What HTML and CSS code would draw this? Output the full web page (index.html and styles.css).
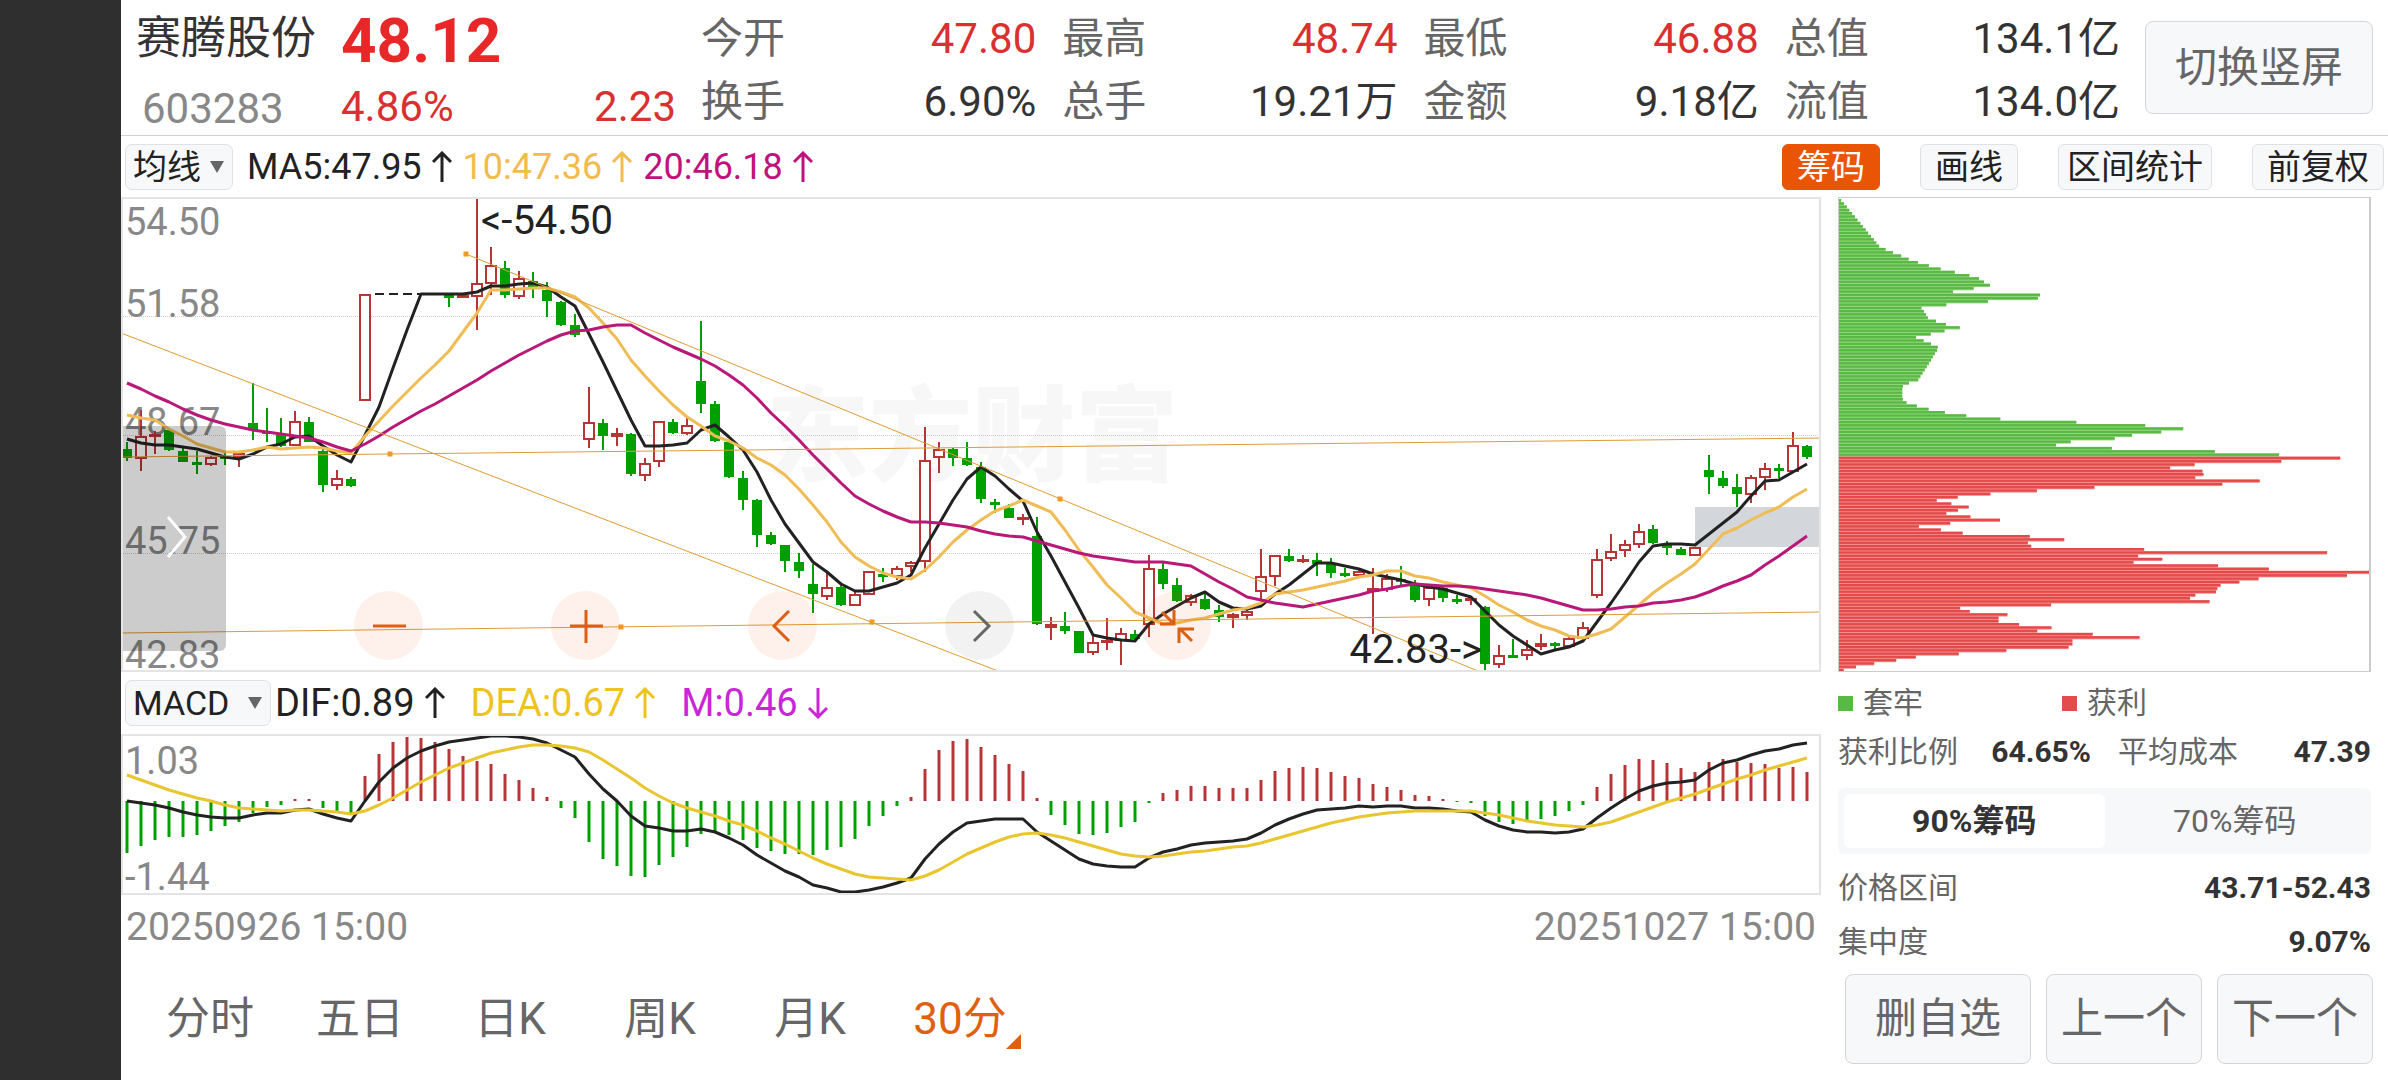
FILE: index.html
```html
<!DOCTYPE html>
<html lang="zh-CN">
<head>
  <meta charset="UTF-8">
  <meta name="viewport" content="width=device-width, initial-scale=1">
  <title>赛腾股份 603283</title>
  <link rel="stylesheet" href="styles.css">
</head>
<body>

  <div class="notch"></div>

  <main class="app">
    <header class="header">
      <div class="stock">
        <h1 class="stock-name">赛腾股份</h1>
        <div class="stock-code">603283</div>
      </div>
      <div class="price">
        <div class="price-now">48.12</div>
        <div class="price-change"><span>4.86%</span><span>2.23</span></div>
      </div>
      <dl class="stats">
        <div class="stat"><dt>今开</dt><dd class="up">47.80</dd></div>
        <div class="stat"><dt>最高</dt><dd class="up">48.74</dd></div>
        <div class="stat"><dt>最低</dt><dd class="up">46.88</dd></div>
        <div class="stat"><dt>总值</dt><dd>134.1亿</dd></div>
        <div class="stat"><dt>换手</dt><dd>6.90%</dd></div>
        <div class="stat"><dt>总手</dt><dd>19.21万</dd></div>
        <div class="stat"><dt>金额</dt><dd>9.18亿</dd></div>
        <div class="stat"><dt>流值</dt><dd>134.0亿</dd></div>
      </dl>
      <button class="btn btn-rotate">切换竖屏</button>
    </header>

    <div class="toolbar">
      <div class="picker picker-ma">
        <select aria-label="主图指标">
          <option>均线</option>
        </select>
      </div>
      <div class="legend legend-ma">
        <span class="c-black">MA5:47.95<svg class="arrow" viewBox="0 0 20 32"><path d="M10 31V2M1 11L10 2L19 11"/></svg></span>
        <span class="c-orange">10:47.36<svg class="arrow" viewBox="0 0 20 32"><path d="M10 31V2M1 11L10 2L19 11"/></svg></span>
        <span class="c-magenta">20:46.18<svg class="arrow" viewBox="0 0 20 32"><path d="M10 31V2M1 11L10 2L19 11"/></svg></span>
      </div>
      <div class="tools">
        <button class="tool active">筹码</button>
        <button class="tool">画线</button>
        <button class="tool tool-wide">区间统计</button>
        <button class="tool">前复权</button>
      </div>
    </div>

    <div class="content">
      <section class="charts">
        <div class="frame">
          <svg id="kline" class="chart" viewBox="123 200 1696 471"></svg>
          <button class="drawer" aria-label="展开">
            <svg viewBox="0 0 22 44"><path d="M3 2L20 22L3 42"/></svg>
          </button>
          <div class="zoom-bar">
            <button class="round" aria-label="缩小"><svg viewBox="-20 -20 40 40"><path d="M-16 0H17"/></svg></button>
            <button class="round" aria-label="放大"><svg viewBox="-20 -20 40 40"><path d="M-16 0H17M0-16V17"/></svg></button>
            <button class="round" aria-label="左移"><svg viewBox="-20 -20 40 40"><path d="M6-15L-9 0L6 15"/></svg></button>
            <button class="round disabled" aria-label="右移"><svg viewBox="-20 -20 40 40"><path d="M-6-15L9 0L-6 15"/></svg></button>
            <button class="round" aria-label="收起"><svg viewBox="-20 -20 40 40"><path d="M-15-14L-3-2M-17-2H-3V-16M15 15L3 3M2 17V3H17"/></svg></button>
          </div>
        </div>

        <div class="sub-bar">
          <div class="picker picker-macd">
            <select aria-label="副图指标">
              <option>MACD</option>
            </select>
          </div>
          <div class="legend legend-macd">
            <span class="c-black">DIF:0.89<svg class="arrow" viewBox="0 0 20 32"><path d="M10 31V2M1 11L10 2L19 11"/></svg></span>
            <span class="c-yellow">DEA:0.67<svg class="arrow" viewBox="0 0 20 32"><path d="M10 31V2M1 11L10 2L19 11"/></svg></span>
            <span class="c-purple">M:0.46<svg class="arrow" viewBox="0 0 20 32"><path d="M10 1V30M1 21L10 30L19 21"/></svg></span>
          </div>
        </div>

        <div class="frame">
          <svg id="macd" class="chart" viewBox="123 -65 1696 157"></svg>
        </div>

        <div class="dates">
          <time>20250926 15:00</time>
          <time>20251027 15:00</time>
        </div>
      </section>

      <section class="chips">
        <svg id="chips" class="chips-chart" viewBox="0 0 1492 471" preserveAspectRatio="none"></svg>
        <div class="chips-legend">
          <span class="key key-green">套牢</span>
          <span class="key key-red">获利</span>
        </div>
        <div class="pair">
          <div class="row"><span>获利比例</span><b>64.65%</b></div>
          <div class="row"><span>平均成本</span><b>47.39</b></div>
        </div>
        <div class="segment">
          <button class="active">90%筹码</button>
          <button>70%筹码</button>
        </div>
        <div class="row row-tall"><span>价格区间</span><b>43.71-52.43</b></div>
        <div class="row row-tall"><span>集中度</span><b>9.07%</b></div>
      </section>
    </div>

    <footer class="footer">
      <nav class="tabs">
        <a href="#">分时</a>
        <a href="#">五日</a>
        <a href="#">日K</a>
        <a href="#">周K</a>
        <a href="#">月K</a>
        <a href="#" class="active">30分</a>
      </nav>
      <div class="actions">
        <button class="btn btn-remove">删自选</button>
        <button class="btn">上一个</button>
        <button class="btn">下一个</button>
      </div>
    </footer>
  </main>

  <script src="script.js"></script>
</body>
</html>
```
FILE: styles.css
```css
* {
  box-sizing: border-box;
}

body {
  margin: 0;
  display: flex;
  min-height: 100vh;
  background: #fff;
  color: #333;
  font-family: Roboto, "Noto Sans CJK SC", sans-serif;
  font-size: 42px;
  line-height: 1;
}

button,
select {
  font-family: inherit;
  line-height: 1;
  cursor: pointer;
}

.notch {
  flex: 0 0 121px;
  background: #2f2f2f;
}

.app {
  flex: 1;
  min-width: 0;
  display: flex;
  flex-direction: column;
}

/* header */

.header {
  display: flex;
  height: 136px;
  padding-left: 15px;
  border-bottom: 1px solid #d0d0d0;
}

.stock {
  width: 205px;
  padding-top: 16px;
}

.stock-name {
  margin: 0;
  font-size: 45px;
  font-weight: 400;
}

.stock-code {
  padding: 27px 0 0 6px;
  color: #888;
}

.price {
  width: 335px;
  padding-top: 10px;
  color: #d93030;
}

.price-now {
  color: #e82828;
  font-size: 62px;
  font-weight: 700;
}

.price-change {
  display: flex;
  justify-content: space-between;
  padding-top: 14px;
}

.stats {
  flex: 1;
  display: grid;
  grid-template-columns: repeat(4, 1fr);
  grid-auto-rows: 63px;
  column-gap: 26px;
  margin: 0;
  padding: 7px 25px 0;
}

.stat {
  display: flex;
  align-items: center;
  justify-content: space-between;
}

.stat dt {
  color: #666;
}

.stat dd {
  margin: 0;
}

.stat .up {
  color: #d93030;
}

.btn {
  width: 156px;
  height: 90px;
  padding: 0;
  border: 1px solid #d2d5d9;
  border-radius: 8px;
  background: #f7f8fa;
  color: #666;
  font-size: 42px;
}

.btn-rotate {
  width: 228px;
  height: 93px;
  margin: 21px 15px 0 0;
}

/* indicator rows */

.toolbar,
.sub-bar {
  display: flex;
  align-items: center;
  height: 62px;
  padding-left: 4px;
}

.toolbar {
  height: 61px;
}

.picker {
  position: relative;
}

.picker::after {
  content: "";
  position: absolute;
  right: 9px;
  top: 17px;
  border: 7px solid transparent;
  border-top: 12px solid #666;
  border-bottom: 0;
  pointer-events: none;
}

.picker select {
  width: 100%;
  height: 46px;
  padding: 0 7px;
  appearance: none;
  border: 1px solid #dfe1e4;
  border-radius: 7px;
  background: #f7f8fa;
  color: #222;
  font-size: 34px;
}

.picker-ma {
  width: 108px;
}

.picker-macd {
  width: 146px;
}

.legend {
  display: flex;
}

.legend span {
  display: flex;
  align-items: center;
  gap: 10px;
}

.legend-ma {
  gap: 11px;
  padding-left: 14px;
  font-size: 36px;
}

.legend-macd {
  gap: 26px;
  padding-left: 4px;
  font-size: 38px;
}

.arrow {
  width: 20px;
  height: 32px;
  fill: none;
  stroke: currentColor;
  stroke-width: 3;
}

.c-black { color: #222; }
.c-orange { color: #f2bb4d; }
.c-magenta { color: #c0127f; }
.c-yellow { color: #edc31f; }
.c-purple { color: #c926d6; }

.tools {
  display: flex;
  gap: 40px;
  margin-left: auto;
  padding-right: 4px;
}

.tool {
  height: 46px;
  padding: 0 14px;
  border: 1px solid #dfe1e4;
  border-radius: 6px;
  background: #f7f8fa;
  color: #222;
  font-size: 34px;
}

.tool-wide {
  padding: 0 8px;
}

.tool.active {
  border-color: #e95504;
  background: #e95504;
  color: #fff;
}

/* charts */

.content {
  display: grid;
  grid-template-columns: minmax(0, 1fr) 533px;
  column-gap: 17px;
  padding-right: 17px;
}

.frame {
  position: relative;
  border: 2px solid #e4e4e4;
}

.chart {
  display: block;
  width: 100%;
}

.axis {
  fill: #888;
  font-size: 38px;
}

.mark {
  fill: #222;
  font-size: 40px;
}

.watermark {
  fill: #f7f7f7;
  font-family: "Noto Sans CJK SC", sans-serif;
  font-size: 103px;
  font-weight: 900;
}

.grid {
  stroke: #ccc;
  stroke-dasharray: 1 1;
}

.gap {
  fill: #d3d6db;
}

.trend {
  stroke: #dd9c35;
}

.handle {
  fill: #f29a1f;
}

.dash {
  stroke: #222;
  stroke-width: 2;
  stroke-dasharray: 9 5;
}

.line {
  fill: none;
  stroke-width: 3;
  stroke-linejoin: round;
}

.line-black { stroke: #222; }
.line-orange { stroke: #f0bc55; }
.line-magenta { stroke: #b81878; }
.line-yellow { stroke: #e9c52f; }

.candle {
  stroke-width: 2;
}

.candle-up {
  fill: #fff;
  stroke: #b93434;
}

.candle-down {
  fill: #00a000;
  stroke: #00a000;
}

.bar {
  stroke-width: 3;
}

.drawer {
  position: absolute;
  left: 0;
  top: 227px;
  width: 103px;
  height: 225px;
  padding: 0 0 0 2px;
  border: 0;
  border-radius: 0 6px 6px 0;
  background: rgba(0, 0, 0, 0.2);
}

.drawer svg {
  width: 22px;
  height: 44px;
  fill: none;
  stroke: #fff;
  stroke-width: 3;
}

.zoom-bar {
  position: absolute;
  left: 231px;
  bottom: 10px;
  display: flex;
  gap: 128px;
}

.round {
  display: flex;
  align-items: center;
  justify-content: center;
  width: 69px;
  height: 69px;
  padding: 0;
  border: 0;
  border-radius: 50%;
  background: rgba(240, 90, 20, 0.09);
}

.round svg {
  width: 40px;
  height: 40px;
  fill: none;
  stroke: #dc5f14;
  stroke-width: 3;
}

.round.disabled {
  background: rgba(0, 0, 0, 0.05);
}

.round.disabled svg {
  stroke: #666;
}

.dates {
  display: flex;
  align-items: center;
  justify-content: space-between;
  height: 64px;
  padding: 0 5px;
  color: #888;
  font-size: 39px;
}

/* chips panel */

.chips {
  color: #666;
  font-size: 30px;
}

.chips-chart {
  display: block;
  width: 100%;
  height: 475px;
  border: 1px solid #ccc;
  border-right-width: 2px;
}

.chips-legend {
  display: grid;
  grid-template-columns: 224px 1fr;
  align-items: center;
  height: 62px;
}

.key {
  display: flex;
  align-items: center;
  gap: 10px;
}

.key::before {
  content: "";
  width: 15px;
  height: 15px;
}

.key-green::before {
  background: #5ab845;
}

.key-red::before {
  background: #e54b4b;
}

.pair {
  display: grid;
  grid-template-columns: 1fr 1fr;
  column-gap: 27px;
}

.row {
  display: flex;
  align-items: center;
  justify-content: space-between;
  height: 36px;
}

.row b {
  color: #333;
}

.row-tall {
  height: 54px;
}

.segment {
  display: grid;
  grid-template-columns: 1fr 1fr;
  height: 66px;
  margin: 18px 0 7px;
  padding: 6px;
  border-radius: 6px;
  background: #f7f8fa;
}

.segment button {
  border: 0;
  border-radius: 6px;
  background: none;
  color: #666;
  font-size: 32px;
}

.segment .active {
  background: #fff;
  color: #333;
  font-weight: 700;
}

/* footer */

.footer {
  display: flex;
  align-items: center;
  justify-content: space-between;
  padding: 5px 15px 15px 14px;
}

.tabs {
  display: flex;
}

.tabs a {
  position: relative;
  width: 150px;
  color: #666;
  font-size: 44px;
  text-align: center;
  text-decoration: none;
}

.tabs .active {
  color: #e06010;
}

.tabs .active::after {
  content: "";
  position: absolute;
  right: 14px;
  bottom: -8px;
  border-left: 15px solid transparent;
  border-bottom: 15px solid #e06010;
}

.actions {
  display: flex;
  gap: 15px;
}

.btn-remove {
  width: 186px;
}
```
FILE: script.js
```js
const NS = "http://www.w3.org/2000/svg";
const STEP = 14;
const START = 127;

// direction, high, body top, body bottom, low
const candles = [
  ["d", 443, 450, 459, 462], ["u", 411, 437, 460, 472], ["u", 432, 435, 438, 455], ["d", 430, 431, 451, 452],
  ["d", 447, 452, 463, 463], ["d", 452, 463, 464, 475], ["u", 457, 458, 466, 467], ["d", 454, 457, 458, 466],
  ["u", 454, 454, 459, 468], ["d", 384, 424, 431, 441], ["d", 409, 432, 435, 443], ["d", 419, 436, 447, 448],
  ["u", 412, 422, 447, 447], ["d", 418, 423, 443, 443], ["d", 449, 452, 486, 493], ["u", 471, 479, 487, 491],
  ["d", 478, 480, 487, 488], ["u", 295, 295, 402, 402], null, null,
  null, null, null, ["d", 296, 296, 297, 308],
  ["u", 296, 296, 297, 297], ["u", 199, 284, 298, 331], ["u", 248, 266, 285, 296], ["d", 262, 269, 296, 299],
  ["u", 272, 279, 298, 300], ["d", 273, 282, 288, 299], ["d", 283, 291, 302, 318], ["d", 302, 303, 326, 327],
  ["d", 315, 326, 336, 338], ["u", 388, 423, 441, 449], ["d", 420, 424, 437, 451], ["u", 429, 434, 438, 447],
  ["d", 434, 435, 475, 477], ["u", 459, 464, 477, 482], ["u", 422, 422, 463, 468], ["d", 420, 423, 434, 435],
  ["u", 418, 426, 435, 436], ["d", 322, 382, 405, 414], ["d", 402, 405, 442, 443], ["d", 442, 443, 478, 479],
  ["d", 472, 479, 501, 511], ["d", 500, 501, 536, 548], ["d", 533, 536, 545, 546], ["d", 546, 546, 562, 573],
  ["d", 554, 563, 572, 579], ["d", 565, 585, 595, 614], ["u", 573, 588, 598, 601], ["d", 586, 588, 606, 607],
  ["u", 592, 595, 607, 607], ["u", 572, 572, 596, 596], ["d", 569, 575, 577, 583], ["u", 567, 569, 578, 581],
  ["u", 562, 563, 568, 573], ["u", 428, 461, 563, 573], ["u", 443, 450, 459, 474], ["d", 449, 450, 459, 467],
  ["d", 443, 459, 466, 467], ["d", 463, 468, 500, 504], ["d", 500, 503, 506, 514], ["d", 505, 509, 519, 519],
  ["u", 515, 518, 519, 526], ["d", 518, 537, 625, 626], ["u", 618, 625, 629, 641], ["d", 613, 627, 632, 635],
  ["d", 632, 632, 654, 654], ["u", 637, 643, 654, 656], ["u", 619, 641, 644, 651], ["u", 629, 634, 642, 666],
  ["d", 631, 635, 640, 641], ["u", 556, 569, 626, 638], ["d", 562, 570, 585, 590], ["d", 579, 586, 602, 603],
  ["u", 595, 596, 604, 607], ["d", 593, 600, 610, 611], ["d", 606, 611, 618, 623], ["u", 614, 615, 619, 629],
  ["u", 610, 612, 617, 621], ["u", 550, 577, 593, 600], ["u", 556, 556, 578, 587], ["d", 550, 557, 562, 563],
  ["u", 556, 560, 563, 564], ["d", 554, 561, 565, 577], ["d", 559, 565, 574, 579], ["d", 569, 574, 575, 578],
  ["u", 571, 572, 577, 577], ["u", 569, 589, 593, 635], ["u", 575, 579, 591, 593], ["d", 567, 580, 583, 586],
  ["d", 581, 586, 601, 603], ["u", 587, 588, 601, 607], ["d", 588, 589, 599, 603], ["d", 596, 600, 602, 605],
  ["u", 597, 599, 602, 606], ["d", 607, 608, 665, 673], ["u", 646, 656, 666, 669], ["d", 640, 656, 658, 658],
  ["u", 641, 650, 657, 661], ["u", 635, 644, 648, 651], ["d", 643, 644, 647, 650], ["u", 638, 639, 648, 649],
  ["u", 623, 628, 640, 642], ["u", 550, 560, 597, 599], ["u", 535, 552, 560, 562], ["u", 541, 545, 552, 558],
  ["u", 525, 532, 546, 549], ["d", 526, 530, 544, 545], ["d", 542, 546, 549, 556], ["d", 548, 550, 556, 556],
  ["u", 548, 548, 557, 557], ["d", 456, 471, 478, 495], ["d", 472, 479, 487, 489], ["d", 475, 488, 495, 508],
  ["u", 476, 478, 496, 504], ["u", 464, 469, 479, 491], ["d", 465, 469, 472, 479], ["u", 433, 446, 473, 474],
  ["d", 446, 447, 458, 460]
];

const ma5 = [
  440, 444, 446, 446, 448, 450, 454, 458, 460, 455, 448, 445, 438, 437, 447, 456, 463, 436, 408, 369,
  331, 295, 295, 295, 295, 293, 287, 287, 285, 284, 288, 298, 307, 335, 363, 392, 421, 447, 447, 446,
  444, 431, 426, 438, 451, 473, 501, 525, 544, 563, 573, 585, 592, 592, 588, 584, 576, 549, 525, 501,
  480, 468, 477, 490, 502, 533, 557, 583, 609, 636, 639, 641, 642, 625, 615, 607, 599, 593, 603, 609,
  610, 607, 595, 586, 575, 564, 564, 567, 570, 575, 578, 581, 585, 588, 590, 594, 598, 612, 626, 637,
  646, 655, 651, 648, 642, 623, 604, 584, 563, 547, 545, 545, 546, 535, 524, 513, 497, 482, 481, 473,
  465
];

const ma10 = [
  416, 419, 421, 430, 437, 445, 449, 453, 453, 451, 448, 450, 449, 448, 449, 452, 454, 437, 422, 407,
  393, 379, 366, 352, 333, 314, 291, 291, 290, 289, 289, 293, 298, 309, 324, 340, 361, 377, 392, 406,
  418, 427, 437, 442, 449, 459, 466, 476, 490, 506, 523, 543, 558, 567, 574, 578, 580, 571, 558, 543,
  531, 521, 512, 507, 501, 507, 513, 531, 551, 568, 586, 599, 613, 619, 625, 624, 621, 619, 615, 611,
  609, 604, 595, 593, 591, 588, 585, 582, 578, 576, 572, 572, 577, 579, 583, 586, 589, 597, 606, 613,
  621, 627, 631, 637, 639, 635, 630, 618, 606, 594, 584, 575, 565, 550, 535, 529, 521, 514, 508, 498,
  490
];

const ma20 = [
  384, 390, 397, 403, 410, 416, 421, 425, 428, 431, 433, 435, 437, 439, 443, 448, 452, 445, 437, 428,
  420, 412, 405, 397, 389, 381, 372, 364, 356, 349, 342, 336, 332, 331, 328, 326, 326, 334, 341, 348,
  354, 360, 367, 376, 386, 399, 414, 427, 441, 456, 470, 484, 497, 505, 512, 518, 523, 523, 524, 526,
  528, 532, 535, 537, 538, 542, 546, 550, 554, 557, 559, 561, 563, 563, 563, 565, 567, 575, 583, 590,
  598, 601, 604, 606, 608, 605, 602, 599, 596, 592, 590, 587, 585, 586, 587, 587, 588, 590, 592, 594,
  596, 599, 603, 607, 611, 611, 610, 608, 607, 604, 603, 601, 598, 593, 587, 582, 576, 566, 557, 547,
  537
];

const hist = [
  -52, -45, -39, -36, -36, -34, -30, -25, -21, -12, -6, -4, 2, 2, -7, -10, -13, 25, 47, 59,
  64, 63, 59, 52, 45, 40, 37, 27, 21, 13, 4, -7, -17, -41, -58, -65, -75, -76, -64, -56,
  -46, -33, -30, -34, -39, -47, -50, -53, -53, -54, -49, -46, -38, -25, -15, -5, 4, 32, 51, 60,
  62, 54, 46, 37, 30, 3, -14, -24, -33, -34, -32, -26, -21, -2, 8, 11, 15, 15, 13, 13,
  13, 21, 30, 33, 34, 33, 29, 25, 23, 17, 14, 11, 6, 5, 2, -1, -2, -15, -21, -23,
  -21, -18, -15, -10, -4, 14, 27, 36, 42, 41, 38, 33, 29, 39, 42, 39, 38, 37, 33, 34,
  29
];

const dif = [
  0, -2, -4, -7, -11, -14, -16, -17, -17, -14, -12, -12, -9, -8, -13, -17, -20, 0, 19, 33,
  43, 50, 55, 59, 61, 63, 65, 65, 64, 62, 58, 51, 44, 27, 12, 0, -15, -25, -27, -30,
  -30, -28, -31, -37, -44, -54, -62, -70, -76, -84, -87, -91, -91, -89, -86, -82, -77, -58, -43, -31,
  -22, -20, -18, -18, -18, -31, -40, -49, -58, -63, -65, -66, -66, -57, -51, -48, -44, -42, -41, -40,
  -38, -32, -24, -18, -13, -9, -8, -7, -5, -6, -5, -5, -7, -7, -8, -10, -11, -19, -25, -29,
  -31, -31, -32, -31, -28, -17, -7, 2, 10, 15, 18, 19, 21, 31, 38, 41, 46, 50, 52, 56,
  58
];

const dea = [
  26, 21, 16, 11, 7, 3, 0, -4, -7, -8, -9, -10, -9, -9, -10, -11, -13, -10, -4, 3,
  11, 19, 26, 33, 38, 43, 48, 51, 54, 56, 56, 55, 53, 49, 41, 32, 23, 13, 5, -2,
  -7, -11, -15, -20, -24, -30, -37, -43, -50, -57, -63, -68, -73, -76, -77, -78, -79, -75, -69, -61,
  -53, -47, -41, -36, -33, -32, -34, -37, -41, -45, -49, -53, -55, -56, -55, -53, -51, -50, -48, -46,
  -45, -42, -38, -34, -30, -26, -22, -19, -16, -14, -12, -11, -10, -10, -10, -10, -10, -12, -14, -17,
  -20, -22, -24, -25, -26, -24, -21, -16, -11, -6, -1, 3, 7, 12, 17, 22, 26, 31, 35, 39,
  43
];

const trapped = [
  6, 14, 22, 29, 37, 45, 52, 60, 67, 75, 82, 90, 98, 105, 113, 131, 152, 175, 196, 222,
  253, 286, 326, 367, 394, 408, 425, 379, 321, 566, 560, 419, 302, 232, 239, 245, 250, 273, 301, 340,
  297, 258, 217, 238, 259, 278, 276, 270, 264, 259, 253, 247, 241, 235, 229, 223, 197, 180, 178, 178,
  178, 180, 190, 219, 252, 298, 358, 454, 668, 862, 969, 907, 825, 776, 652, 611, 768, 1058, 1239
];

const profit = [
  1411, 1245, 1001, 932, 1023, 1026, 1003, 1184, 1079, 719, 557, 426, 334, 275, 316, 365, 335, 302, 370, 453,
  313, 225, 287, 348, 537, 634, 532, 541, 859, 1374, 842, 910, 829, 1067, 1210, 1492, 1430, 1181, 1127, 1074,
  1065, 1061, 1003, 988, 1043, 597, 341, 368, 474, 449, 449, 507, 598, 558, 714, 846, 657, 657, 646, 471,
  337, 216, 161, 99, 48, 13
];

function add(svg, tag, attrs, text) {
  const el = document.createElementNS(NS, tag);
  for (const key in attrs) el.setAttribute(key, attrs[key]);
  if (text) el.textContent = text;
  svg.appendChild(el);
}

function xAt(i) {
  return START + i * STEP;
}

function drawLine(svg, values, cls, sign) {
  const points = values.map((v, i) => xAt(i) + "," + v * sign).join(" ");
  add(svg, "polyline", { points: points, class: "line " + cls });
}

function drawKline() {
  const svg = document.getElementById("kline");

  add(svg, "text", { x: 766, y: 474, class: "watermark" }, "东方财富");
  [317, 436, 554].forEach(y => add(svg, "line", { x1: 121, x2: 1821, y1: y + 0.5, y2: y + 0.5, class: "grid" }));
  add(svg, "rect", { x: 1695, y: 508, width: 126, height: 40, class: "gap" });

  [["54.50", 236], ["51.58", 318], ["48.67", 436], ["45.75", 555], ["42.83", 669]].forEach(([label, y]) => {
    add(svg, "text", { x: 125, y: y, class: "axis" }, label);
  });

  add(svg, "line", { x1: 375, x2: 425, y1: 295, y2: 295, class: "dash" });

  candles.forEach((c, i) => {
    if (!c) return;
    const [dir, high, top, bottom, low] = c;
    const x = xAt(i);
    const h = Math.max(bottom - top, 2);
    const cls = "candle candle-" + (dir === "u" ? "up" : "down");
    add(svg, "path", { d: `M${x} ${high}V${top}M${x} ${bottom}V${low}`, class: cls });
    // hollow bodies are a little wider than the filled ones
    const half = dir === "u" ? 5 : 4;
    add(svg, "rect", { x: x - half, y: top + 1, width: half * 2, height: Math.max(h - 2, 1), class: cls });
  });

  drawLine(svg, ma5, "line-black", 1);
  drawLine(svg, ma10, "line-orange", 1);
  drawLine(svg, ma20, "line-magenta", 1);

  // hand-drawn trend lines
  [[121, 334, 998, 672], [466, 255, 1478, 672], [121, 458, 1821, 439], [121, 634, 1821, 613]].forEach(t => {
    add(svg, "line", { x1: t[0], y1: t[1], x2: t[2], y2: t[3], class: "trend" });
  });
  [[466, 255], [390, 455], [621, 628], [872, 623], [1060, 500]].forEach(([x, y]) => {
    add(svg, "rect", { x: x - 2.5, y: y - 2.5, width: 5, height: 5, class: "handle" });
  });

  add(svg, "text", { x: 481, y: 235, class: "mark" }, "<-54.50");
  add(svg, "text", { x: 1482, y: 664, class: "mark", "text-anchor": "end" }, "42.83->");
}

function drawMacd() {
  const svg = document.getElementById("macd");

  add(svg, "text", { x: 125, y: -27, class: "axis" }, "1.03");
  add(svg, "text", { x: 125, y: 89, class: "axis" }, "-1.44");

  hist.forEach((v, i) => {
    const cls = "bar candle-" + (v > 0 ? "up" : "down");
    add(svg, "path", { d: `M${xAt(i)} 0V${-v}`, class: cls });
  });

  drawLine(svg, dif, "line-black", -1);
  drawLine(svg, dea, "line-yellow", -1);
}

function drawChips() {
  const svg = document.getElementById("chips");
  const pitch = 471 / (trapped.length + profit.length);

  trapped.concat(profit).forEach((w, i) => {
    const green = i < trapped.length;
    const y = 1 + i * pitch;
    add(svg, "rect", { x: 0, y: y, width: w, height: pitch, fill: green ? "#8fd67a" : "#f58a8a" });
    add(svg, "rect", { x: 0, y: y, width: w, height: pitch - 0.9, fill: green ? "#5ab845" : "#e54a4a" });
  });
}

drawKline();
drawMacd();
drawChips();
```
